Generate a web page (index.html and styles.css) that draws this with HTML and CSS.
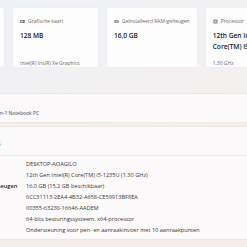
FILE: index.html
```html
<!DOCTYPE html>
<html>
<head>
    <title>Info</title>
    <link rel="stylesheet" href="styles.css">
</head>
<body>
    <div class="page">
        <div class="cards">
            <div class="card"></div>
            <div class="card">
                <div class="card-label">
                    <svg class="card-icon" viewBox="0 0 10 10"><rect x="0.5" y="2" width="9" height="6" rx="1" fill="#7a7a7a"/><rect x="2" y="3.5" width="4" height="3" fill="#d6d6d6"/></svg>
                    Grafische kaart
                </div>
                <div class="card-value">128 MB</div>
                <div class="card-sub">Intel(R) Iris(R) Xe Graphics</div>
            </div>
            <div class="card">
                <div class="card-label">
                    <svg class="card-icon" viewBox="0 0 10 10"><rect x="0.5" y="2.5" width="9" height="5" rx="0.8" fill="#7a7a7a"/><rect x="2" y="4" width="1.3" height="2" fill="#d6d6d6"/><rect x="4.3" y="4" width="1.3" height="2" fill="#d6d6d6"/><rect x="6.6" y="4" width="1.3" height="2" fill="#d6d6d6"/></svg>
                    Geïnstalleerd RAM-geheugen
                </div>
                <div class="card-value">16,0 GB</div>
                <div class="card-sub"></div>
            </div>
            <div class="card">
                <div class="card-label">
                    <svg class="card-icon" viewBox="0 0 10 10"><rect x="0.8" y="0.8" width="8.4" height="8.4" rx="1" fill="#8a8a8a"/><rect x="3" y="3" width="4" height="4" fill="#d6d6d6"/></svg>
                    Processor
                </div>
                <div class="card-value">12th Gen Intel(R) Core(TM) i5-1235U</div>
                <div class="card-sub">1.30 GHz</div>
            </div>
        </div>

        <div class="panel device">
            <div class="device-text">
                <div class="device-model">2-in-1 Notebook PC</div>
            </div>
        </div>

        <div class="panel specs">
            <div class="panel-head">Apparaatspecificaties</div>
            <div class="spec-grid">
                <div class="spec-label">Apparaatnaam</div>
                <div class="spec-value">DESKTOP-AOAGILO</div>
                <div class="spec-label">Processor</div>
                <div class="spec-value">12th Gen Intel(R) Core(TM) i5-1235U (1.30 GHz)</div>
                <div class="spec-label">Geïnstalleerd RAM-geheugen</div>
                <div class="spec-value">16,0 GB (15,2 GB beschikbaar)</div>
                <div class="spec-label">Apparaat-id</div>
                <div class="spec-value">6CC31113-2EA4-4B32-A658-CE59913BF8EA</div>
                <div class="spec-label">Product-id</div>
                <div class="spec-value">00355-63230-16646-AADEM</div>
                <div class="spec-label">Systeemtype</div>
                <div class="spec-value">64-bits besturingssysteem, x64-processor</div>
                <div class="spec-label">Pen en aanraking</div>
                <div class="spec-value">Ondersteuning voor pen- en aanraakinvoer met 10 aanraakpunten</div>
            </div>
        </div>
    </div>
</body>
</html>
```

FILE: styles.css
```css
* {
    box-sizing: border-box;
}

body {
    margin: 0;
    width: 247px;
    height: 247px;
    overflow: hidden;
    font-family: 'Segoe UI', 'Open Sans', Arial, sans-serif;
    color: #1b1b1b;
    background: linear-gradient(160deg, #eef1f6 0%, #f3f0f0 45%, #f6ede8 100%);
}

.page {
    width: 247px;
    height: 247px;
    overflow: hidden;
}

.cards {
    display: flex;
    gap: 7px;
    padding-top: 7px;
    margin-left: -82px;
}

.card {
    flex: 0 0 87px;
    height: 61px;
    padding: 10px 7px 0 7px;
    background-color: #fdfdfd;
    border: 1px solid #eceef1;
    border-radius: 3px;
    display: flex;
    flex-direction: column;
}

.card-label {
    display: flex;
    align-items: center;
    gap: 3px;
    font-size: 5px;
    color: #6b6b6b;
    white-space: nowrap;
    height: 6px;
}

.card-icon {
    width: 5px;
    height: 5px;
    flex: 0 0 5px;
}

.card-value {
    margin-top: 6px;
    font-size: 6.6px;
    font-weight: 600;
    line-height: 11px;
    height: 26px;
}

.card-sub {
    margin-top: 4px;
    font-size: 5px;
    color: #6b6b6b;
    white-space: nowrap;
}

.panel {
    margin: 0 -10px;
    background-color: #fbf9f9;
    border: 1px solid #efe9e6;
    border-radius: 3px;
}

.device {
    margin-top: 25px;
    height: 30px;
    padding: 15px 0 0 10px;
}

.device-text {
    margin-left: -7px;
}

.device-model {
    font-size: 5px;
    line-height: 8px;
    color: #4a4a4a;
    white-space: nowrap;
}

.specs {
    margin-top: 3px;
    height: 114px;
}

.panel-head {
    height: 29px;
    padding: 13px 0 0 0;
    margin-left: -58px;
    font-size: 6.5px;
    font-weight: 600;
    line-height: 8px;
    white-space: nowrap;
    border-bottom: 1px solid #efe9e6;
}

.spec-grid {
    display: grid;
    grid-template-columns: 87px 1fr;
    padding-top: 3px;
    margin-left: -52px;
    font-size: 5.6px;
    line-height: 11px;
}

.spec-label {
    font-weight: 600;
    white-space: nowrap;
}

.spec-value {
    color: #3a3a3a;
    white-space: nowrap;
}
```
